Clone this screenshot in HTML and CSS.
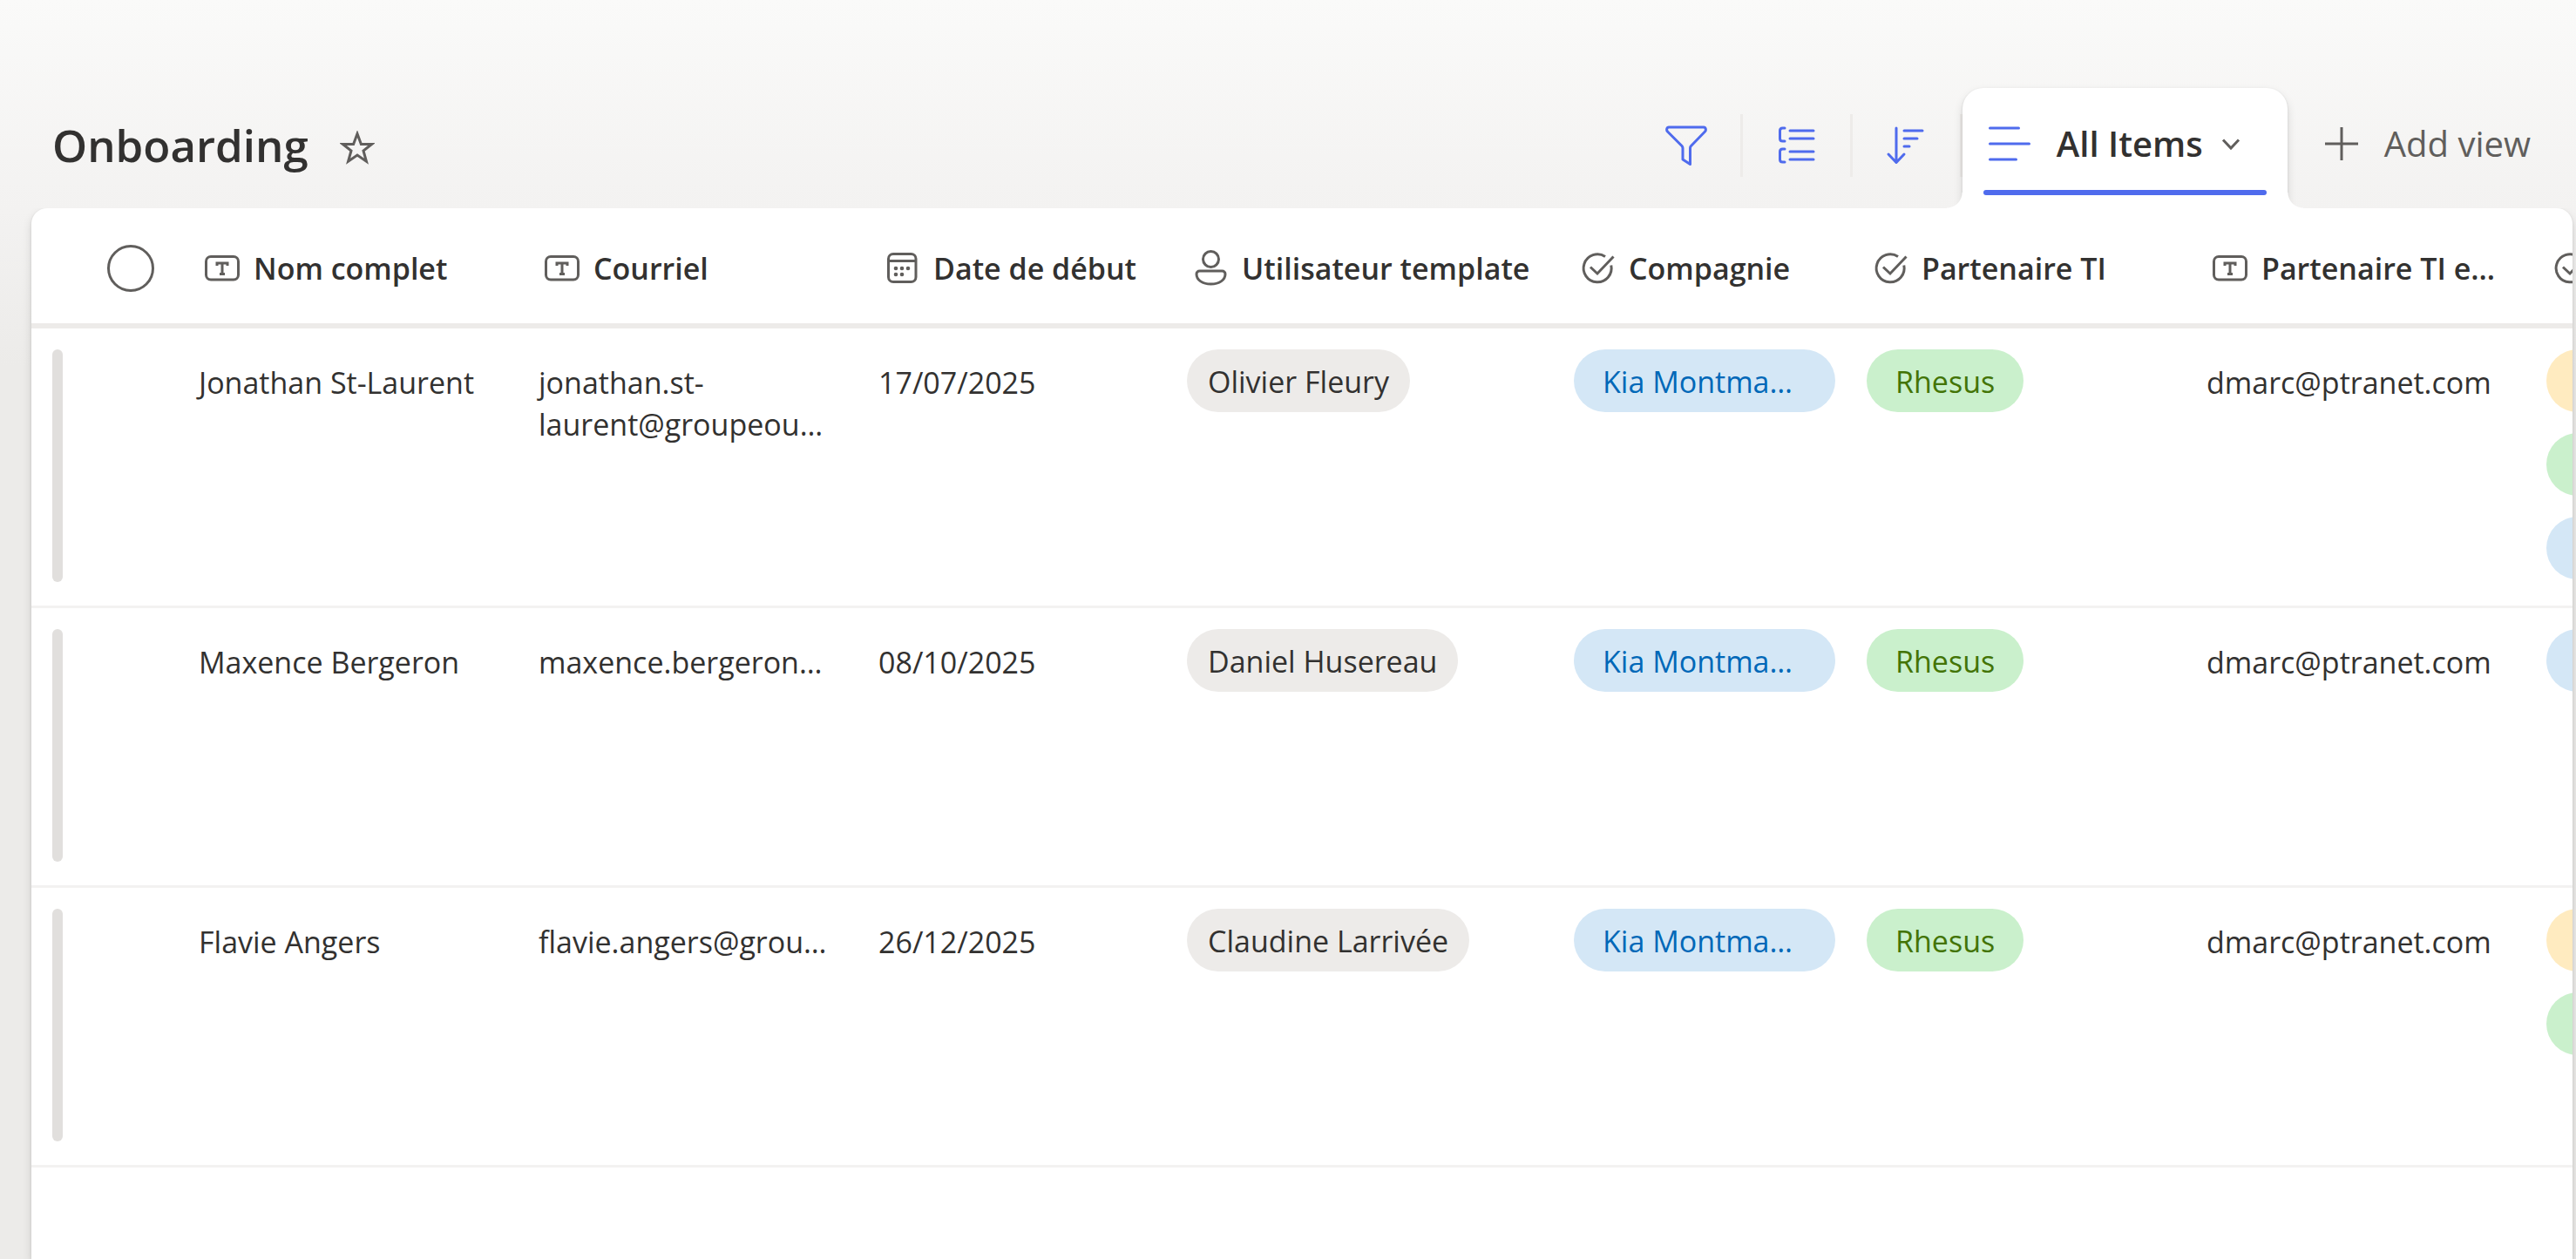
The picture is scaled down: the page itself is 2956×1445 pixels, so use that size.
FILE: index.html
```html
<!DOCTYPE html>
<html lang="fr">
<head>
<meta charset="utf-8">
<title>Onboarding</title>
<link rel="stylesheet" href="styles.css">
</head>
<body>
<svg class="sprite" aria-hidden="true">
  <symbol id="i-text" viewBox="0 0 48 48"><rect x="5.500" y="10.500" width="37" height="26.500" rx="5.500"/><path d="M18 21v-3h12v3M24 18v12.500M21 30.500h6"/></symbol>
  <symbol id="i-date" viewBox="0 0 48 48"><rect x="8.500" y="7.500" width="31.500" height="32" rx="5.500"/><path d="M8.500 15.500h31.500"/><g class="dots"><circle cx="17" cy="24" r="2.300"/><circle cx="24" cy="24" r="2.300"/><circle cx="31" cy="24" r="2.300"/><circle cx="17" cy="31" r="2.300"/><circle cx="24" cy="31" r="2.300"/></g></symbol>
  <symbol id="i-person" viewBox="0 0 48 48"><circle cx="24.500" cy="13.500" r="9"/><path d="M11.500 27h26a3.500 3.500 0 0 1 3.500 3.500C41 37.500 34 42 24.500 42S8 37.500 8 30.500a3.500 3.500 0 0 1 3.500-3.500z"/></symbol>
  <symbol id="i-choice" viewBox="0 0 48 48"><path d="M33 10.500A16 16 0 1 0 39.800 20.500M16 22.500l8 7.500L42.500 10.500"/></symbol>
</svg>

<header class="topbar">
  <div class="heading">
    <h1>Onboarding</h1>
    <button class="plain" aria-label="Favori"><svg class="star" viewBox="0 0 40 40"><path d="M20 3.500l4.400 12H36.500L27 23l3.400 12.200L20 28l-10.400 7.200L13 23 3.500 15.500H15.600z"/></svg></button>
  </div>
  <div class="tools">
    <button class="tool" aria-label="Filtrer"><svg viewBox="0 0 48 48"><path d="M4 3h40c2.500 0 3 3.500 1.500 5L29.500 24.500c-.7.700-1 1.300-1 2.500V45.500L20 40V27c0-1.200-.4-1.800-1-2.500L2.500 8C1 6.500 1.500 3 4 3z"/></svg></button>
    <button class="tool" aria-label="Grouper"><svg viewBox="0 0 48 48"><path d="M11 4H8.500c-2 0-3 1-3 3v9c0 2 1 3 3 3H11M11 28H8.500c-2 0-3 1-3 3v9c0 2 1 3 3 3H11M17 7h27M17 16h27M17 31h27M17 40h27"/></svg></button>
    <button class="tool" aria-label="Trier"><svg viewBox="0 0 48 48"><path d="M13 4v39M4 34l9 9.500L22 34M22 7h21M22 16h15M22 25h6"/></svg></button>
  </div>
  <button class="tab">
    <span class="tab-body">
      <svg class="lines" viewBox="0 0 48 42"><path d="M1.500 3h33M1.500 21h45M1.500 39h30"/></svg>
      <span class="tab-label">All Items</span>
      <svg class="chevron" viewBox="0 0 24 24"><path d="M3 7.500l9 9.500 9-9.500"/></svg>
    </span>
    <span class="tab-bar"></span>
  </button>
  <button class="add"><svg class="plus" viewBox="0 0 40 40"><path d="M20 1v38M1 20h38"/></svg>Add view</button>
</header>

<main class="card">
  <div class="scroller">
  <table>
    <colgroup><col class="w-select"><col class="w-text"><col class="w-text"><col class="w-date"><col class="w-person"><col class="w-choice"><col class="w-text"><col class="w-text"><col class="w-text"></colgroup>
    <thead>
      <tr>
        <th><input type="checkbox" class="round" aria-label="Tout"></th>
        <th><span class="col"><svg><use href="#i-text"/></svg>Nom complet</span></th>
        <th><span class="col"><svg><use href="#i-text"/></svg>Courriel</span></th>
        <th><span class="col"><svg><use href="#i-date"/></svg>Date de début</span></th>
        <th><span class="col"><svg><use href="#i-person"/></svg>Utilisateur template</span></th>
        <th><span class="col"><svg><use href="#i-choice"/></svg>Compagnie</span></th>
        <th><span class="col"><svg><use href="#i-choice"/></svg>Partenaire TI</span></th>
        <th><span class="col"><svg><use href="#i-text"/></svg>Partenaire TI e…</span></th>
        <th><span class="col"><svg><use href="#i-choice"/></svg></span></th>
      </tr>
    </thead>
    <tbody>
      <tr>
        <td class="mark"><span class="bar"></span></td>
        <td>Jonathan St-Laurent</td>
        <td>jonathan.st-<br>laurent@groupeou…</td>
        <td>17/07/2025</td>
        <td class="chips"><span class="chip person">Olivier Fleury</span></td>
        <td class="chips"><span class="chip blue wide">Kia Montma…</span></td>
        <td class="chips"><span class="chip green">Rhesus</span></td>
        <td>dmarc@ptranet.com</td>
        <td class="chips"><div class="stack"><span class="chip yellow"></span><span class="chip green"></span><span class="chip blue"></span></div></td>
      </tr>
      <tr>
        <td class="mark"><span class="bar"></span></td>
        <td>Maxence Bergeron</td>
        <td>maxence.bergeron…</td>
        <td>08/10/2025</td>
        <td class="chips"><span class="chip person">Daniel Husereau</span></td>
        <td class="chips"><span class="chip blue wide">Kia Montma…</span></td>
        <td class="chips"><span class="chip green">Rhesus</span></td>
        <td>dmarc@ptranet.com</td>
        <td class="chips"><div class="stack"><span class="chip blue"></span></div></td>
      </tr>
      <tr>
        <td class="mark"><span class="bar"></span></td>
        <td>Flavie Angers</td>
        <td>flavie.angers@grou…</td>
        <td>26/12/2025</td>
        <td class="chips"><span class="chip person">Claudine Larrivée</span></td>
        <td class="chips"><span class="chip blue wide">Kia Montma…</span></td>
        <td class="chips"><span class="chip green">Rhesus</span></td>
        <td>dmarc@ptranet.com</td>
        <td class="chips"><div class="stack"><span class="chip yellow"></span><span class="chip green"></span></div></td>
      </tr>
    </tbody>
  </table>
  </div>
</main>
</body>
</html>
```
FILE: styles.css
```css
* { box-sizing: border-box; }

body {
  margin: 0;
  min-height: 100vh;
  display: flex;
  flex-direction: column;
  overflow: hidden;
  font-family: "Segoe UI", "Open Sans", "Noto Sans", sans-serif;
  font-size: 34px;
  line-height: 48px;
  color: #323130;
  background: linear-gradient(#fafaf9, #f3f2f1 240px, #ecebe9 420px);
}

button {
  margin: 0;
  padding: 0;
  border: 0;
  background: none;
  font: inherit;
  color: inherit;
}

svg {
  display: block;
  flex: none;
  fill: none;
  stroke: currentColor;
  stroke-width: 3;
}

.sprite { position: absolute; width: 0; height: 0; }
.dots { fill: currentColor; stroke: none; }

/* Top bar */
.topbar {
  display: flex;
  align-items: stretch;
  padding: 101px 52px 0 60px;
}

.heading {
  flex: 1;
  display: flex;
  align-items: center;
  gap: 36px;
}

h1 {
  margin: 0;
  padding-bottom: 8px;
  font-size: 51px;
  line-height: 72px;
  font-weight: 600;
}

.plain { color: #605e5c; }
.star { width: 40px; height: 40px; }

.tools {
  display: flex;
  align-items: center;
  padding-bottom: 6px;
  color: #4f6bed;
}

.tool {
  width: 126px;
  height: 72px;
  display: flex;
  align-items: center;
  justify-content: center;
  border-right: 3px solid #edebe9;
}

.tool svg { width: 48px; height: 48px; }
.tool svg, .lines { stroke-linecap: round; stroke-linejoin: round; }

.tab {
  position: relative;
  display: flex;
  flex-direction: column;
  width: 373px;
  height: 138px;
  padding: 0 24px 15px;
  border-radius: 24px 24px 0 0;
  background: #fff;
  box-shadow: 0 5px 11px rgba(0, 0, 0, .13), 0 1px 3px rgba(0, 0, 0, .11);
}

.tab::before,
.tab::after {
  content: "";
  position: absolute;
  bottom: 0;
  width: 18px;
  height: 18px;
}

.tab::before { right: 100%; background: radial-gradient(circle at 0 0, transparent 17px, #fff 18px); }
.tab::after { left: 100%; background: radial-gradient(circle at 100% 0, transparent 17px, #fff 18px); }

.tab-body {
  flex: 1;
  display: flex;
  align-items: center;
  padding: 10px 24px 0 6px;
}

.tab-label {
  margin: 0 20px 0 30px;
  font-size: 40px;
  font-weight: 600;
}

.tab-bar { align-self: stretch; height: 6px; border-radius: 3px; background: #4f6bed; }

.lines { width: 48px; height: 42px; color: #4f6bed; }
.chevron { width: 24px; height: 24px; color: #605e5c; }

.add {
  display: flex;
  align-items: center;
  gap: 29px;
  margin-left: 42px;
  padding-bottom: 10px;
  font-size: 40px;
  color: #605e5c;
}

.plus { width: 40px; height: 40px; }

/* List */
.card {
  position: relative;
  flex: 1;
  min-width: 0;
  margin: 0 4px 0 36px;
  border-radius: 18px 18px 0 0;
  background: #fff;
  box-shadow: 0 5px 11px rgba(0, 0, 0, .13), 0 1px 3px rgba(0, 0, 0, .11);
  clip-path: inset(0 -20px -20px -20px);
}

.scroller {
  overflow-x: auto;
  scrollbar-width: none;
  border-radius: 18px 18px 0 0;
}

table {
  width: 3258px;
  table-layout: fixed;
  border-collapse: separate;
  border-spacing: 0;
}

.w-select { width: 174px; }
.w-text { width: 390px; }
.w-date { width: 354px; }
.w-person { width: 444px; }
.w-choice { width: 336px; }

th {
  height: 138px;
  padding: 6px 0 0 21px;
  border-bottom: 6px solid #edebe9;
  text-align: left;
  font-weight: 600;
  white-space: nowrap;
}

th:first-child { padding-left: 87px; }

.col { display: flex; align-items: center; gap: 12px; }
.col svg { width: 48px; height: 48px; color: #605e5c; }

.round {
  appearance: none;
  display: block;
  width: 54px;
  height: 54px;
  margin: 0;
  border: 3px solid #605e5c;
  border-radius: 50%;
}

td {
  padding: 38px 0 0 18px;
  border-bottom: 3px solid #f3f2f1;
  vertical-align: top;
  white-space: nowrap;
}

td.mark { padding: 24px 0 27px 24px; }
td.chips { padding-top: 24px; }

.bar { display: block; width: 12px; height: 267px; border-radius: 6px; background: #e1dfdd; }

.chip {
  display: block;
  width: fit-content;
  height: 72px;
  padding: 0 33px;
  border-radius: 36px;
  line-height: 74px;
}

.person { padding: 0 24px; background: #edebe9; }
.blue { background: #d4e7f6; color: #0068b8; }
.green { background: #caf0cc; color: #437406; }
.yellow { background: #ffebc0; }
.wide { width: 300px; }

.stack { display: flex; flex-direction: column; gap: 24px; }
.stack .chip { width: 180px; }
```
